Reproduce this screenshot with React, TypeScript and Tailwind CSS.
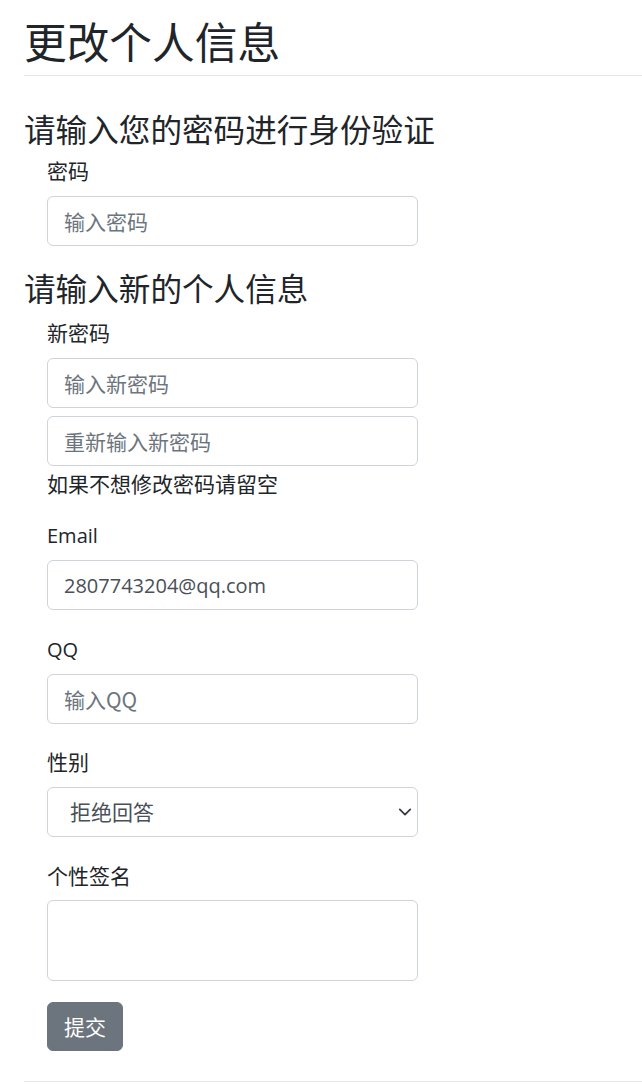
import React from 'react';

const font = { fontFamily: '"Segoe UI", "Open Sans", "Noto Sans CJK SC", sans-serif' };

const boxCls =
  'block w-[371px] h-[50px] rounded-[6px] border border-[#ced4da] bg-white px-4 text-[#495057] placeholder:text-[#6c757d] outline-none';
const inputCls = `${boxCls} text-[21px]`;

const Label: React.FC<{ children: React.ReactNode; mb?: string }> = ({ children, mb = 'mb-[10px]' }) => (
  <label className={`block h-[30px] leading-[28px] text-[21px] text-[#212529] ${mb}`}>{children}</label>
);

export default function App() {
  return (
    <div className="min-h-[1086px] bg-white text-[#212529] font-['Noto_Sans_CJK_SC',sans-serif]">
      <div className="pl-6 pt-[15px]">
        <h1 className="text-[42.7px] leading-[50px] font-normal">更改个人信息</h1>
        <hr className="mt-[10px] border-t border-[#e6e6e6]" />

        <h3 className="mt-[33px] text-[31.6px] leading-[38px] font-normal">请输入您的密码进行身份验证</h3>
        <div className="pl-[23px] mt-[9px]">
          <Label>密码</Label>
          <input type="password" placeholder="输入密码" className={inputCls} />
        </div>

        <h3 className="mt-[22px] text-[31.6px] leading-[38px] font-normal">请输入新的个人信息</h3>
        <form className="pl-[23px] mt-[12px]" onSubmit={(e) => e.preventDefault()}>
          <Label>新密码</Label>
          <input type="password" placeholder="输入新密码" className={inputCls} />
          <input type="password" placeholder="重新输入新密码" className={`${inputCls} mt-2`} />
          <p className="h-[30px] leading-[30px] text-[21px] mt-[2px]">如果不想修改密码请留空</p>

          <div className="mt-[22px]">
            <Label>
              <span className="text-[20px]" style={font}>Email</span>
            </Label>
            <input type="text" defaultValue="2807743204@qq.com" className={`${boxCls} text-[20px]`} style={font} />
          </div>

          <div className="mt-[24px]">
            <Label>
              <span className="text-[20px]" style={font}>QQ</span>
            </Label>
            <input type="text" placeholder="输入QQ" className={inputCls} />
          </div>

          <div className="mt-[23px]">
            <Label>性别</Label>
            <div className="relative w-[371px]">
              <select
                defaultValue="0"
                className="block w-[371px] h-[50px] appearance-none rounded-[6px] border border-[#ced4da] bg-white pl-[22px] pr-10 text-[21px] text-[#495057] outline-none"
              >
                <option value="0">拒绝回答</option>
                <option value="1">男</option>
                <option value="2">女</option>
              </select>
              <svg
                className="pointer-events-none absolute right-[6px] top-[18px]"
                width="14"
                height="14"
                viewBox="0 0 16 16"
                fill="none"
                stroke="#343a40"
                strokeWidth="2"
                strokeLinecap="round"
                strokeLinejoin="round"
              >
                <path d="M2 5l6 6 6-6" />
              </svg>
            </div>
          </div>

          <div className="mt-[24px]">
            <Label mb="mb-[9px]">个性签名</Label>
            <textarea className="block w-[371px] h-[81px] resize-none rounded-[6px] border border-[#ced4da] bg-white px-4 py-2 text-[20px] outline-none" />
          </div>

          <button
            type="submit"
            className="mt-[21px] h-[49px] rounded-[6px] border border-[#6c757d] bg-[#6c757d] px-4 text-[21px] text-white"
          >
            提交
          </button>
        </form>
        <hr className="mt-[30px] border-t border-[#e6e6e6]" />
      </div>
    </div>
  );
}
